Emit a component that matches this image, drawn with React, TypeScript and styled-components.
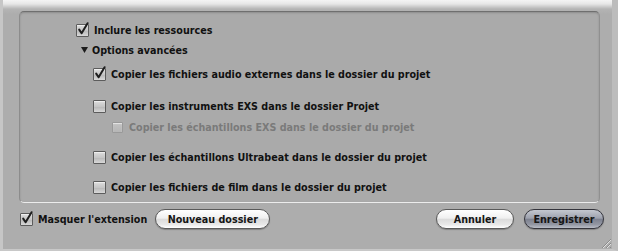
import React from "react";
import styled, { createGlobalStyle } from "styled-components";

const Global = createGlobalStyle`
  html, body { margin: 0; padding: 0; background: #b0b0b0; }
  body { font-family: "DejaVu Sans", "Liberation Sans", sans-serif; }
`;

const Window = styled.div`
  position: relative;
  width: 618px;
  height: 251px;
  box-sizing: border-box;
  background: linear-gradient(#f4f4f4 0px, #e6e6e6 4px, #b4b4b4 9px, #adadad 14px, #adadad 100%);
  border-left: 3px solid #c6c6c6;
  border-right: 6px solid #bcbcbc;
  border-bottom: 2px solid #c8c8c8;
  padding: 11px 0 0 16px;
  display: flex;
  flex-direction: column;
  overflow: hidden;
`;

const GroupBox = styled.div`
  width: 581px;
  height: 192px;
  box-sizing: border-box;
  border: 1px solid #8c8c8c;
  border-top-color: #6f6f6f;
  border-bottom-color: #ececec;
  border-right-color: #909090;
  border-radius: 5px;
  background: #aaaaaa;
  box-shadow: inset 0 1px 2px rgba(0,0,0,0.18);
  padding-top: 10px;
  display: flex;
  flex-direction: column;
`;

const Row = styled.div<{ $indent: number; $gap: number }>`
  display: flex;
  align-items: center;
  height: 16px;
  margin-top: ${(p) => p.$gap}px;
  padding-left: ${(p) => p.$indent}px;
`;

const Label = styled.span<{ $disabled?: boolean }>`
  font-size: 9.6px;
  font-weight: bold;
  color: ${(p) => (p.$disabled ? "#7a7a7a" : "#111111")};
  white-space: nowrap;
`;

const Box = styled.span<{ $size: number; $disabled?: boolean }>`
  position: relative;
  flex: none;
  width: ${(p) => p.$size}px;
  height: ${(p) => p.$size}px;
  box-sizing: border-box;
  border: 1px solid ${(p) => (p.$disabled ? "#999999" : "#5c5c5c")};
  border-radius: 1px;
  background: ${(p) =>
    p.$disabled
      ? "linear-gradient(#c2c2c2, #b6b6b6)"
      : "linear-gradient(#dcdcdc, #c6c6c6 50%, #b6b6b6 51%, #d8d8d8)"};
  box-shadow: inset 0 1px 1px rgba(255,255,255,0.6);
  margin-right: ${(p) => (p.$size > 11 ? 5 : 6)}px;
`;

const Tick = styled.svg`
  position: absolute;
  left: 0px;
  top: -3px;
  overflow: visible;
`;

const Triangle = styled.svg`
  flex: none;
  margin-right: 4px;
  margin-left: 4px;
`;

const Check = ({ checked, size = 13, disabled }: { checked?: boolean; size?: number; disabled?: boolean }) => (
  <Box $size={size} $disabled={disabled}>
    {checked && (
      <Tick width="13" height="14" viewBox="0 0 13 14">
        <path d="M2.2 7.6 L4.6 11.2 L10.6 1.2" fill="none" stroke="#1e1e1e" strokeWidth="2" strokeLinecap="round" strokeLinejoin="round" />
      </Tick>
    )}
  </Box>
);

const BottomBar = styled.div`
  display: flex;
  align-items: center;
  height: 22px;
  margin-top: 5px;
  padding-left: 1px;
  width: 584px;
`;

const Spacer = styled.div<{ $w?: number }>`
  flex: ${(p) => (p.$w ? "none" : "1")};
  width: ${(p) => (p.$w ? `${p.$w}px` : "auto")};
`;

const Button = styled.button<{ $w: number; $default?: boolean }>`
  width: ${(p) => p.$w}px;
  height: 20px;
  box-sizing: border-box;
  border-radius: 10px;
  border: 1px solid ${(p) => (p.$default ? "#34343c" : "#5a5a5a")};
  background: ${(p) =>
    p.$default
      ? "linear-gradient(#c4c8d0 0%, #9ea2ae 45%, #7e8290 52%, #9296a2 80%, #b8bcc6 100%)"
      : "linear-gradient(#ffffff 0%, #f0f0f0 45%, #dcdcdc 52%, #e8e8e8 80%, #ffffff 100%)"};
  box-shadow: 0 1px 1px rgba(0,0,0,0.25);
  font-family: "DejaVu Sans", "Liberation Sans", sans-serif;
  font-size: 9.6px;
  font-weight: bold;
  color: #151515;
  padding: 0;
  margin-left: ${(p) => (p.$default ? 10 : 0)}px;
  display: flex;
  align-items: center;
  justify-content: center;
`;

const Grip = styled.svg`
  position: absolute;
  right: 0px;
  bottom: 0px;
`;

export default function App() {
  return (
    <>
      <Global />
      <Window>
        <GroupBox>
          <Row $indent={56} $gap={0}>
            <Check checked />
            <Label>Inclure les ressources</Label>
          </Row>
          <Row $indent={57} $gap={4}>
            <Triangle width="7" height="6" viewBox="0 0 7 6">
              <path d="M0 0 L7 0 L3.5 6 Z" fill="#1c1c1c" />
            </Triangle>
            <Label>Options avancées</Label>
          </Row>
          <Row $indent={73} $gap={8}>
            <Check checked />
            <Label>Copier les fichiers audio externes dans le dossier du projet</Label>
          </Row>
          <Row $indent={73} $gap={16}>
            <Check />
            <Label>Copier les instruments EXS dans le dossier Projet</Label>
          </Row>
          <Row $indent={92} $gap={5}>
            <Check size={11} disabled />
            <Label $disabled>Copier les échantillons EXS dans le dossier du projet</Label>
          </Row>
          <Row $indent={73} $gap={14}>
            <Check />
            <Label>Copier les échantillons Ultrabeat dans le dossier du projet</Label>
          </Row>
          <Row $indent={73} $gap={14}>
            <Check />
            <Label>Copier les fichiers de film dans le dossier du projet</Label>
          </Row>
        </GroupBox>
        <BottomBar>
          <Check checked />
          <Label>Masquer l'extension</Label>
          <Spacer $w={8} />
          <Button $w={115}>Nouveau dossier</Button>
          <Spacer />
          <Button $w={78}>Annuler</Button>
          <Button $w={80} $default>Enregistrer</Button>
        </BottomBar>
        <Grip width="14" height="14" viewBox="0 0 14 14">
          <path d="M13 4 L4 13 M13 8 L8 13 M13 12 L12 13" stroke="#8a8a8a" strokeWidth="1" />
          <path d="M13 5 L5 13 M13 9 L9 13" stroke="#e0e0e0" strokeWidth="1" />
        </Grip>
      </Window>
    </>
  );
}
